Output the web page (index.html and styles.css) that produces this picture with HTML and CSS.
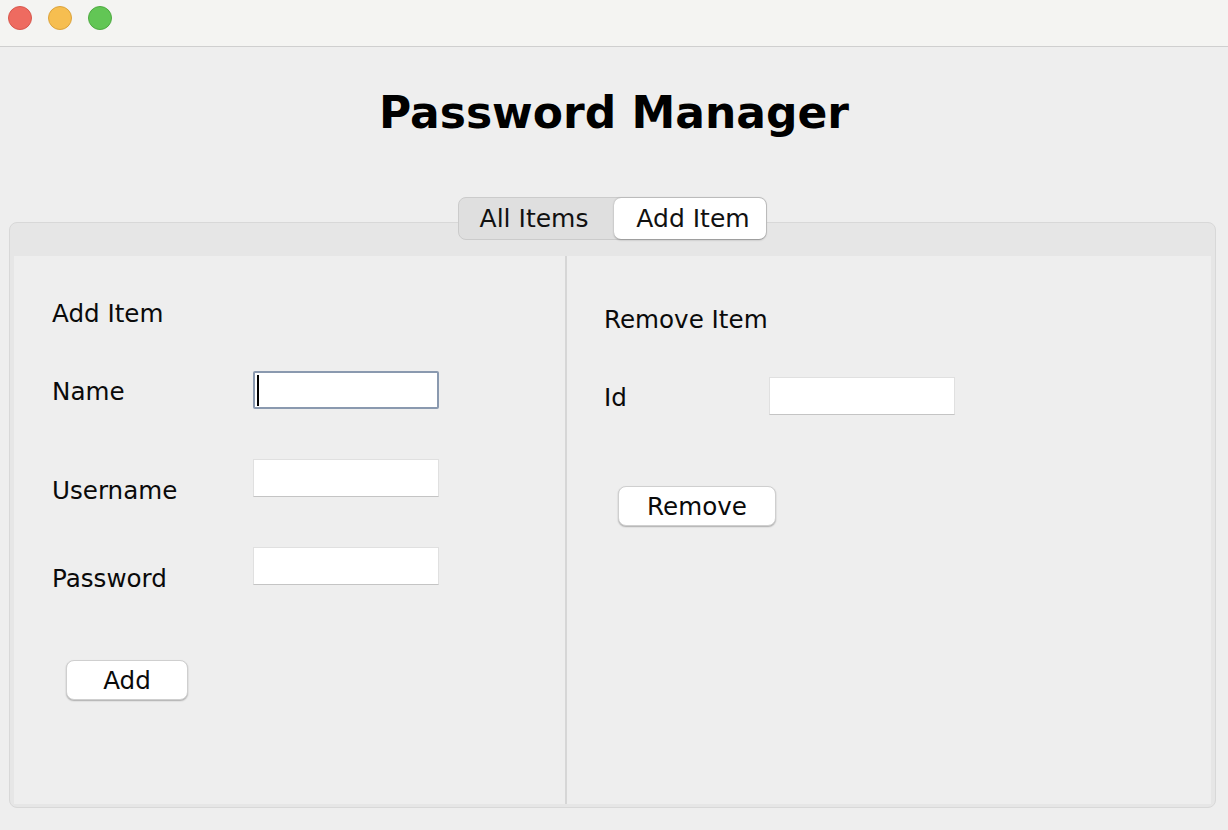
FILE: index.html
```html
<!DOCTYPE html>
<html lang="en">
<head>
<meta charset="utf-8">
<title>Password Manager</title>
<link rel="stylesheet" href="styles.css">
</head>
<body>
<div class="titlebar">
  <span class="light red"></span>
  <span class="light yellow"></span>
  <span class="light green"></span>
</div>
<h1 class="title">Password Manager</h1>
<div class="tabs-wrap">
  <div class="tabs">
    <div class="tab">All Items</div>
    <div class="tab active">Add Item</div>
  </div>
</div>
<div class="pane">
  <div class="pane-head"></div>
  <div class="pane-body">
    <section class="left">
      <div class="heading">Add Item</div>
      <div class="form form-left">
        <div class="label first">Name</div>
        <div class="field focused"><span class="caret"></span></div>
        <div class="label">Username</div>
        <div class="field"></div>
        <div class="label">Password</div>
        <div class="field"></div>
      </div>
      <button class="btn btn-add">Add</button>
    </section>
    <div class="divider"></div>
    <section class="right">
      <div class="heading">Remove Item</div>
      <div class="form form-right">
        <div class="label first">Id</div>
        <div class="field"></div>
      </div>
      <button class="btn btn-remove">Remove</button>
    </section>
  </div>
</div>
</body>
</html>
```
FILE: styles.css
```css
* { box-sizing: border-box; }
html, body { margin: 0; padding: 0; }
body {
  background: #eeeeee;
  font-family: "DejaVu Sans", "Liberation Sans", sans-serif;
  color: #111;
  width: 1228px;
  height: 830px;
  overflow: hidden;
}
.titlebar {
  height: 47px;
  background: #f4f4f2;
  border-bottom: 1px solid #cfcfcf;
  display: flex;
  align-items: flex-start;
  gap: 16px;
  padding: 6px 0 0 8px;
}
.light {
  width: 24px;
  height: 24px;
  border-radius: 50%;
  display: block;
}
.red { background: #ee6b60; border: 1px solid #d8574d; }
.yellow { background: #f6be50; border: 1px solid #dca33c; }
.green { background: #62c655; border: 1px solid #4eaa41; }

.title {
  margin: 40px 0 0;
  text-align: center;
  font-size: 44px;
  line-height: 52px;
  font-weight: bold;
  color: #000;
}
.tabs-wrap {
  margin-top: 58px;
  display: flex;
  justify-content: center;
  padding-right: 4px;
  position: relative;
  z-index: 2;
}
.tabs {
  display: flex;
  height: 43px;
  background: #dfdfdf;
  border: 1px solid #cbcbcb;
  border-radius: 8px;
}
.tab {
  width: 155px;
  line-height: 41px;
  text-align: center;
  font-size: 25px;
  color: #111;
  padding-right: 4px;
}
.tab.active {
  width: 152px;
  padding: 0 0 0 7px;
  background: #ffffff;
  border-radius: 7px;
  box-shadow: 0 0.5px 2px rgba(0,0,0,0.3);
}
.pane {
  position: relative;
  z-index: 1;
  margin: -18px 12px 0 9px;
  border: 1px solid #d8d8d8;
  border-radius: 8px;
  background: #e6e6e6;
  padding: 0 4px 3px 4px;
}
.pane-head { height: 33px; }
.pane-body {
  height: 548px;
  background: #eeeeee;
  display: grid;
  grid-template-columns: 551px 2px 1fr;
}
.divider { background: #d6d6d6; }
.left { padding: 44px 0 0 38px; }
.right { padding: 50px 0 0 37px; }
.heading {
  font-size: 24.6px;
  line-height: 28px;
  color: #0a0a0a;
}
.form {
  margin-top: 43px;
  display: grid;
  grid-template-rows: 38px;
  grid-auto-rows: 38px;
  row-gap: 50px;
}
.form-left { grid-template-columns: 201px 186px; }
.form-right { grid-template-columns: 165px 186px; }
.label {
  font-size: 24.6px;
  line-height: 28px;
  margin-top: 18px;
  white-space: nowrap;
  color: #0a0a0a;
}
.label.first { margin-top: 7px; }
.field {
  width: 186px;
  height: 38px;
  background: #ffffff;
  border: 1px solid #e0e0e0;
  border-bottom-color: #c4c4c4;
  display: flex;
  align-items: center;
}
.field.focused {
  border: 2px solid #8a99af;
  border-radius: 2px;
  padding-left: 2px;
}
.caret {
  width: 2px;
  height: 31px;
  background: #000;
}
.btn {
  display: block;
  height: 40px;
  background: #ffffff;
  border: 0.5px solid #cfcfcf;
  border-radius: 8px;
  box-shadow: 0 1px 1.5px rgba(0,0,0,0.28);
  font-family: "DejaVu Sans", "Liberation Sans", sans-serif;
  font-size: 24.6px;
  color: #0a0a0a;
  padding: 0;
  margin-left: 14px;
}
.btn-add { width: 122px; margin-top: 75px; }
.btn-remove { width: 158px; margin-top: 71px; }
```
